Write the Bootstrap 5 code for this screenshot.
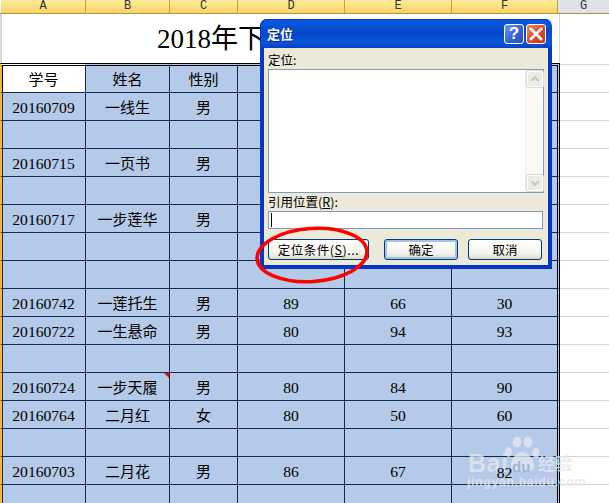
<!DOCTYPE html>
<html lang="zh">
<head>
<meta charset="utf-8">
<title>定位</title>
<link href="https://cdn.jsdelivr.net/npm/bootstrap@5.3.0/dist/css/bootstrap.min.css" rel="stylesheet">
<style>
html,body{margin:0;height:100%;background:#fff;overflow:hidden}
.sheet{position:relative;width:609px;height:503px;overflow:hidden;font-family:"Noto Sans CJK SC","Liberation Sans",sans-serif;color:#000}
.col-strip{height:14px;border-bottom:1px solid #b8923a;padding-left:1px;background:#fff}
.col-cap{height:13px;flex:none;font:12px/13px "Liberation Mono",monospace;color:#333;text-align:center;background:linear-gradient(#fdeb9c,#f9d466);border-right:1px solid #c9a040}
.cap-a{width:85px}.cap-b{width:84px}.cap-c{width:68px}.cap-d,.cap-e{width:107px}.cap-f{width:106px}
.cap-g{flex:1 1 auto;background:#dfe3e8;border-right:0}
.xl-grid{border-collapse:separate;border-spacing:0;table-layout:fixed;width:609px}
.c-a{width:86px}.c-b{width:84px}.c-c{width:68px}.c-d,.c-e{width:107px}.c-f{width:108px}.c-g{width:49px}
.xl-grid td{padding:1px 0 0;height:28px;text-align:center;vertical-align:middle;font-size:15px;line-height:18px;background:#b5c9e8;border-right:1px solid #14294f;border-bottom:1px solid #14294f;white-space:nowrap;position:relative}
.xl-grid .w-a{border-left:2px solid #f6b53c;box-shadow:inset 1px 0 #14294f}
.xl-grid .w-f{border-right:3px double #000}
.xl-grid .w-g{background:#fff;border-right:0;border-bottom:1px solid #d6d6d6}
.xl-grid .title-cell{height:49px;background:#fff;border-left:2px solid #d5d8dc;border-right:1px solid #d6d6d6;border-bottom:0;padding:0 0 0 155px;text-align:left;font:27px/48px "Liberation Serif","Noto Sans CJK SC",serif}
.xl-grid .title-g{height:49px;border-bottom:0}
.xl-grid .head-row td{height:30px;border-top:3px double #000;padding-top:0}
.xl-grid .head-row .w-a{background:#fff;box-shadow:inset 1px 0 #000}
.xl-grid .head-row .w-g{border-top:0;background:#fff linear-gradient(#d6d6d6,#d6d6d6) 0 1px/100% 1px no-repeat}
.xl-grid .digit{font:15.6px/18px "Liberation Serif",serif;padding-top:2px}
.xl-grid .digit-low{padding-top:5px}
.over-mark{position:relative;z-index:2}
.note-flag{position:absolute;top:0;right:0;width:0;height:0;border-top:5px solid #f00;border-left:5px solid transparent}
.dlg{position:absolute;left:260px;top:19px;width:292px;height:250px;border-radius:7px 7px 0 0;padding:29px 4px 4px;background:linear-gradient(#0a5fe6 0,#0a57dc 3px,#0447c8 14px,#0a55dc 24px,#0640c0 29px,#0535c6 30px,#0535c6 100%);box-shadow:inset 1px 1px #0a3ec0}
.dlg-head{position:absolute;left:7px;top:7px;font-size:13px;line-height:16px;font-weight:700;color:#fff;text-shadow:1px 1px #0b2a8c}
.win-btn{position:absolute;top:5px;width:20px;height:20px;border:1px solid #fff;border-radius:3px;display:flex;align-items:center;justify-content:center;color:#fff}
.win-help{left:244px;background:linear-gradient(135deg,#6f97ee,#2f5fd8 60%,#2a50c4);font:700 17px/18px "Liberation Sans",sans-serif}
.win-close{left:266px;background:linear-gradient(135deg,#e98a6c,#d9502a 55%,#c23c1a)}
.dlg-body{height:100%;background:#ece9d8;padding:4px 4px 0;font-size:12.5px;line-height:16px;color:#000}
.dlg-label{display:block;margin:0 0 1px;font-size:12.5px;line-height:16px;height:16px}
.ref-list{height:124px;background:#fff;border:1px solid #7f9db9;padding:1px}
.ref-scroll{width:17px;height:100%;background:#fbfbf6;border-left:1px solid #eeeeea}
.scroll-arrow{width:16px;height:16px;background:#ecece4;border:1px solid #fff;border-radius:2px;box-shadow:0 0 0 1px #dcdcd4;display:block;margin-left:1px}
.dlg-label-ref{margin-top:1px}
.ref-input.form-control{height:18px;min-height:0;padding:0 2px;border:1px solid #7f9db9;border-radius:0;background:#fff;font-size:12px;line-height:14px;width:275px;box-shadow:none}
.caret-bar{display:block;width:1px;height:14px;background:#000}
.xp-btn.btn{height:21px;padding:0;font-size:12.5px;line-height:19px;color:#000;border:1px solid #003c74;border-radius:3px;background:linear-gradient(#fff,#f4f4ec 70%,#dcd8c8);--bs-btn-border-color:#003c74}
.xp-go{width:101px;letter-spacing:.5px}.xp-ok{width:74px;box-shadow:inset 0 0 0 2px #a8c0e8}.xp-no{width:74px}
.btn-row{margin-top:10px}
.gap-go{margin-right:15px}.gap-ok{margin-right:10px}
.dlg-hint{position:absolute;left:254px;top:225px;pointer-events:none}
.mark-wrap{position:absolute;left:466px;top:436px;width:112px;height:58px;color:rgba(228,231,238,.78);pointer-events:none}
.mark-paw{position:absolute;left:38px;top:0}
.mark-bai{position:absolute;left:2px;top:15px;font:700 25px/25px "Liberation Sans",sans-serif;letter-spacing:.5px}
.mark-du{position:absolute;left:46px;top:22px;font:700 15px/18px "Liberation Sans",sans-serif;color:rgba(150,175,215,.9)}
.mark-jy{position:absolute;left:72px;top:16px;font-size:17px;line-height:22px;font-weight:700}
.mark-url{position:absolute;left:1px;top:39px;font:700 12.5px/15px "Liberation Sans",sans-serif;letter-spacing:.55px}
</style>
</head>
<body>
<div class="sheet">
  <div class="d-flex col-strip">
    <div class="col-cap cap-a">A</div><div class="col-cap cap-b">B</div><div class="col-cap cap-c">C</div><div class="col-cap cap-d">D</div><div class="col-cap cap-e">E</div><div class="col-cap cap-f">F</div><div class="col-cap cap-g">G</div>
  </div>
  <table class="xl-grid">
    <colgroup><col class="c-a"><col class="c-b"><col class="c-c"><col class="c-d"><col class="c-e"><col class="c-f"><col class="c-g"></colgroup>
    <tbody>
      <tr><td class="title-cell" colspan="6">2018年下</td><td class="w-g title-g"></td></tr>
      <tr class="head-row"><td class="w-a">学号</td><td class="w-b">姓名</td><td class="w-c">性别</td><td class="w-d"></td><td class="w-e"></td><td class="w-f"></td><td class="w-g"></td></tr>
      <tr><td class="w-a digit">20160709</td><td class="w-b">一线生</td><td class="w-c">男</td><td class="w-d"></td><td class="w-e"></td><td class="w-f"></td><td class="w-g"></td></tr>
      <tr><td class="w-a"></td><td class="w-b"></td><td class="w-c"></td><td class="w-d"></td><td class="w-e"></td><td class="w-f"></td><td class="w-g"></td></tr>
      <tr><td class="w-a digit">20160715</td><td class="w-b">一页书</td><td class="w-c">男</td><td class="w-d"></td><td class="w-e"></td><td class="w-f"></td><td class="w-g"></td></tr>
      <tr><td class="w-a"></td><td class="w-b"></td><td class="w-c"></td><td class="w-d"></td><td class="w-e"></td><td class="w-f"></td><td class="w-g"></td></tr>
      <tr><td class="w-a digit">20160717</td><td class="w-b">一步莲华</td><td class="w-c">男</td><td class="w-d"></td><td class="w-e"></td><td class="w-f"></td><td class="w-g"></td></tr>
      <tr><td class="w-a"></td><td class="w-b"></td><td class="w-c"></td><td class="w-d"></td><td class="w-e"></td><td class="w-f"></td><td class="w-g"></td></tr>
      <tr><td class="w-a"></td><td class="w-b"></td><td class="w-c"></td><td class="w-d"></td><td class="w-e"></td><td class="w-f"></td><td class="w-g"></td></tr>
      <tr><td class="w-a digit">20160742</td><td class="w-b">一莲托生</td><td class="w-c">男</td><td class="w-d digit">89</td><td class="w-e digit">66</td><td class="w-f digit">30</td><td class="w-g"></td></tr>
      <tr><td class="w-a digit">20160722</td><td class="w-b">一生悬命</td><td class="w-c">男</td><td class="w-d digit">80</td><td class="w-e digit">94</td><td class="w-f digit">93</td><td class="w-g"></td></tr>
      <tr><td class="w-a"></td><td class="w-b"></td><td class="w-c"></td><td class="w-d"></td><td class="w-e"></td><td class="w-f"></td><td class="w-g"></td></tr>
      <tr><td class="w-a digit">20160724</td><td class="w-b">一步天履<span class="note-flag"></span></td><td class="w-c">男</td><td class="w-d digit">80</td><td class="w-e digit">84</td><td class="w-f digit">90</td><td class="w-g"></td></tr>
      <tr><td class="w-a digit">20160764</td><td class="w-b">二月红</td><td class="w-c">女</td><td class="w-d digit">80</td><td class="w-e digit">50</td><td class="w-f digit">60</td><td class="w-g"></td></tr>
      <tr><td class="w-a"></td><td class="w-b"></td><td class="w-c"></td><td class="w-d"></td><td class="w-e"></td><td class="w-f"></td><td class="w-g"></td></tr>
      <tr><td class="w-a digit">20160703</td><td class="w-b">二月花</td><td class="w-c">男</td><td class="w-d digit">86</td><td class="w-e digit">67</td><td class="w-f digit digit-low"><span class="over-mark">82</span></td><td class="w-g"></td></tr>
      <tr><td class="w-a"></td><td class="w-b"></td><td class="w-c"></td><td class="w-d"></td><td class="w-e"></td><td class="w-f"></td><td class="w-g"></td></tr>
    </tbody>
  </table>

  <div class="dlg">
    <div class="dlg-head">定位</div>
    <div class="win-btn win-help">?</div>
    <div class="win-btn win-close">
      <svg width="14" height="14" viewBox="0 0 14 14"><path d="M2 2 L12 12 M12 2 L2 12" stroke="#fff" stroke-width="2.6" stroke-linecap="square" fill="none"/></svg>
    </div>
    <div class="dlg-body d-flex flex-column">
      <label class="dlg-label">定位:</label>
      <div class="ref-list d-flex justify-content-end">
        <div class="ref-scroll d-flex flex-column justify-content-between">
          <svg class="scroll-arrow" viewBox="0 0 16 16"><path d="M4 10 L8 6 L12 10" stroke="#c6c6be" stroke-width="2.4" fill="none"/></svg>
          <svg class="scroll-arrow" viewBox="0 0 16 16"><path d="M4 6 L8 10 L12 6" stroke="#c6c6be" stroke-width="2.4" fill="none"/></svg>
        </div>
      </div>
      <label class="dlg-label dlg-label-ref">引用位置(<u>R</u>):</label>
      <div class="form-control ref-input d-flex align-items-center"><span class="caret-bar"></span></div>
      <div class="d-flex btn-row">
        <button type="button" class="btn xp-btn xp-go gap-go">定位条件(<u>S</u>)...</button>
        <button type="button" class="btn xp-btn xp-ok gap-ok">确定</button>
        <button type="button" class="btn xp-btn xp-no">取消</button>
      </div>
    </div>
  </div>

  <svg class="dlg-hint" width="120" height="66" viewBox="0 0 120 66">
    <ellipse cx="58" cy="30" rx="55" ry="26.5" transform="rotate(-4 58 30)" fill="none" stroke="#f00" stroke-width="3.6"/>
  </svg>

  <div class="mark-wrap">
    <svg class="mark-paw" width="36" height="36" viewBox="0 0 36 36" fill="currentColor">
      <ellipse cx="4.5" cy="16" rx="3.6" ry="5"/>
      <ellipse cx="13" cy="6" rx="4.4" ry="5.6"/>
      <ellipse cx="24" cy="6" rx="4.4" ry="5.6"/>
      <ellipse cx="32" cy="17" rx="3.6" ry="5"/>
      <path d="M7 30 C7 22 13 16 18 16 C24 16 30 23 30 30 C30 35 25 36 18 35 C11 36 7 35 7 30 Z"/>
    </svg>
    <span class="mark-bai">Bai</span>
    <span class="mark-du">du</span>
    <span class="mark-jy">经验</span>
    <span class="mark-url">jingyan.baidu.com</span>
  </div>
</div>
<script src="https://cdn.jsdelivr.net/npm/bootstrap@5.3.0/dist/js/bootstrap.bundle.min.js"></script>
</body>
</html>
